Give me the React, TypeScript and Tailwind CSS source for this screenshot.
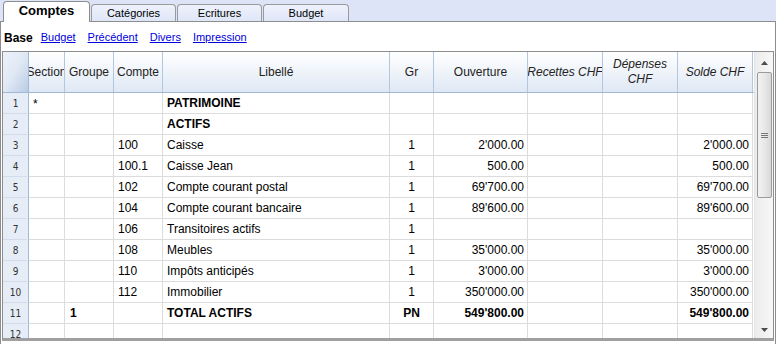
import React from 'react';

type Row = {
  n: number;
  section?: string;
  groupe?: string;
  compte?: string;
  libelle?: string;
  gr?: string;
  ouverture?: string;
  solde?: string;
  bold?: boolean;
};

const rows: Row[] = [
  { n: 1, section: '*', libelle: 'PATRIMOINE', bold: true },
  { n: 2, libelle: 'ACTIFS', bold: true },
  { n: 3, compte: '100', libelle: 'Caisse', gr: '1', ouverture: "2'000.00", solde: "2'000.00" },
  { n: 4, compte: '100.1', libelle: 'Caisse Jean', gr: '1', ouverture: '500.00', solde: '500.00' },
  { n: 5, compte: '102', libelle: 'Compte courant postal', gr: '1', ouverture: "69'700.00", solde: "69'700.00" },
  { n: 6, compte: '104', libelle: 'Compte courant bancaire', gr: '1', ouverture: "89'600.00", solde: "89'600.00" },
  { n: 7, compte: '106', libelle: 'Transitoires actifs', gr: '1' },
  { n: 8, compte: '108', libelle: 'Meubles', gr: '1', ouverture: "35'000.00", solde: "35'000.00" },
  { n: 9, compte: '110', libelle: 'Impôts anticipés', gr: '1', ouverture: "3'000.00", solde: "3'000.00" },
  { n: 10, compte: '112', libelle: 'Immobilier', gr: '1', ouverture: "350'000.00", solde: "350'000.00" },
  { n: 11, groupe: '1', libelle: 'TOTAL ACTIFS', gr: 'PN', ouverture: "549'800.00", solde: "549'800.00", bold: true },
  { n: 12 },
];

const tabs = [
  { label: 'Comptes', w: 'w-[87px]', active: true },
  { label: 'Catégories', w: 'w-[85px]' },
  { label: 'Ecritures', w: 'w-[85px]' },
  { label: 'Budget', w: 'w-[86px]' },
];

const cols = 'grid grid-cols-[26px_36px_49px_49px_227px_44px_94px_75px_75px_75px]';

const headCell =
  'flex items-center justify-center overflow-hidden whitespace-nowrap border-r border-[#b3c6df] bg-gradient-to-b from-[#ffffff] to-[#dfe8f4] text-[12px] text-[#222]';

const cell = 'flex items-center overflow-hidden whitespace-nowrap border-r border-b border-[#dcdcdc] text-[12px] text-black';

function ScrollBar() {
  return (
    <div className="flex w-[19px] flex-col items-center border-l border-[#e3e3e3] bg-gradient-to-r from-[#ececec] to-[#f7f7f7]">
      <div className="flex h-[18px] w-full items-center justify-center pt-[4px]">
        <svg width="7" height="4" viewBox="0 0 7 4">
          <path d="M0 4 L3.5 0 L7 4 Z" fill="#4d4d4d" />
        </svg>
      </div>
      <div className="mt-[2px] flex h-[126px] w-[15px] items-center justify-center rounded-[2px] border border-[#9b9b9b] bg-gradient-to-r from-[#f2f2f2] via-[#e8e8e8] to-[#d9d9d9]">
        <div className="flex flex-col gap-[1px]">
          <div className="h-px w-[7px] bg-[#777]" />
          <div className="h-px w-[7px] bg-[#777]" />
          <div className="h-px w-[7px] bg-[#777]" />
        </div>
      </div>
      <div className="flex-1" />
      <div className="flex h-[14px] w-full items-center justify-center pb-[3px]">
        <svg width="7" height="4" viewBox="0 0 7 4">
          <path d="M0 0 L3.5 4 L7 0 Z" fill="#4d4d4d" />
        </svg>
      </div>
    </div>
  );
}

export default function App() {
  return (
    <div className="h-[344px] w-[776px] overflow-hidden bg-white font-['Liberation_Sans',Arial,sans-serif]">
      {/* Tabs */}
      <div className="flex h-[22px] items-end border-b border-[#8d8d8d] bg-[#dde4f7] pl-[3px]">
        {tabs.map((t) =>
          t.active ? (
            <div
              key={t.label}
              className={`${t.w} relative -mb-px flex h-[21px] items-center justify-center rounded-t-[4px] border border-b-0 border-[#8d8d8d] bg-white pb-[2px] text-[13px] font-bold text-black`}
            >
              {t.label}
            </div>
          ) : (
            <div
              key={t.label}
              className={`${t.w} ml-[1px] flex h-[17px] items-center justify-center rounded-t-[4px] border border-b-0 border-[#9a9a9a] bg-gradient-to-b from-[#eef2fc] to-[#dfe6f8] pt-[1px] text-[11px] text-black`}
            >
              {t.label}
            </div>
          )
        )}
      </div>

      {/* Panel */}
      <div className="flex h-[322px] flex-col border-x border-[#8d8d8d] px-[1px]">
        {/* Sub links */}
        <div className="flex h-[29px] items-center gap-[12px] pl-[2px] pt-[2px] text-[11px]">
          <span className="text-[12px] font-bold text-black">Base</span>
          <span className="ml-[-4px] text-[#0000dd] underline">Budget</span>
          <span className="text-[#0000dd] underline">Précédent</span>
          <span className="text-[#0000dd] underline">Divers</span>
          <span className="text-[#0000dd] underline">Impression</span>
        </div>

        {/* Grid */}
        <div className="flex h-[290px] border border-[#8d8d8d] border-b-[3px] border-b-[#a0a0a0]">
          <div className="flex-1 overflow-hidden">
            {/* Header */}
            <div className={`${cols} h-[41px] border-b border-[#a3b8d4]`}>
              <div className="border-r border-[#a3b8d4] bg-gradient-to-br from-[#edf2fa] via-[#dfe8f4] to-[#b9cbe4]" />
              <div className={headCell}>Section</div>
              <div className={headCell}>Groupe</div>
              <div className={headCell}>Compte</div>
              <div className={headCell}>Libellé</div>
              <div className={headCell}>Gr</div>
              <div className={headCell}>Ouverture</div>
              <div className={`${headCell} text-[11px] italic`}>Recettes CHF</div>
              <div className={`${headCell} flex-col text-[11px] italic leading-[15px]`}>
                <span>Dépenses</span>
                <span>CHF</span>
              </div>
              <div className={`${headCell} text-[11px] italic`}>Solde CHF</div>
            </div>

            {/* Body */}
            {rows.map((r) => (
              <div key={r.n} className={`${cols} h-[21px]`}>
                <div className="flex items-center justify-center border-r border-b border-[#a3b8d4] border-b-[#d2dcea] bg-[#e6edf7] font-['DejaVu_Sans_Condensed',sans-serif] text-[10px] text-[#333]">
                  {r.n}
                </div>
                <div className={`${cell} items-start pl-[4px] pt-[2px] text-[10px]`}>{r.section}</div>
                <div className={`${cell} pl-[5px] font-bold`}>{r.groupe}</div>
                <div className={`${cell} pl-[4px]`}>{r.compte}</div>
                <div className={`${cell} pl-[4px] ${r.bold ? 'font-bold' : ''}`}>{r.libelle}</div>
                <div className={`${cell} justify-center ${r.bold ? 'font-bold' : ''}`}>{r.gr}</div>
                <div className={`${cell} justify-end pr-[3px] ${r.bold ? 'font-bold' : ''}`}>{r.ouverture}</div>
                <div className={cell} />
                <div className={cell} />
                <div className={`${cell} justify-end pr-[3px] ${r.bold ? 'font-bold' : ''}`}>{r.solde}</div>
              </div>
            ))}
          </div>
          <ScrollBar />
        </div>
      </div>
    </div>
  );
}
